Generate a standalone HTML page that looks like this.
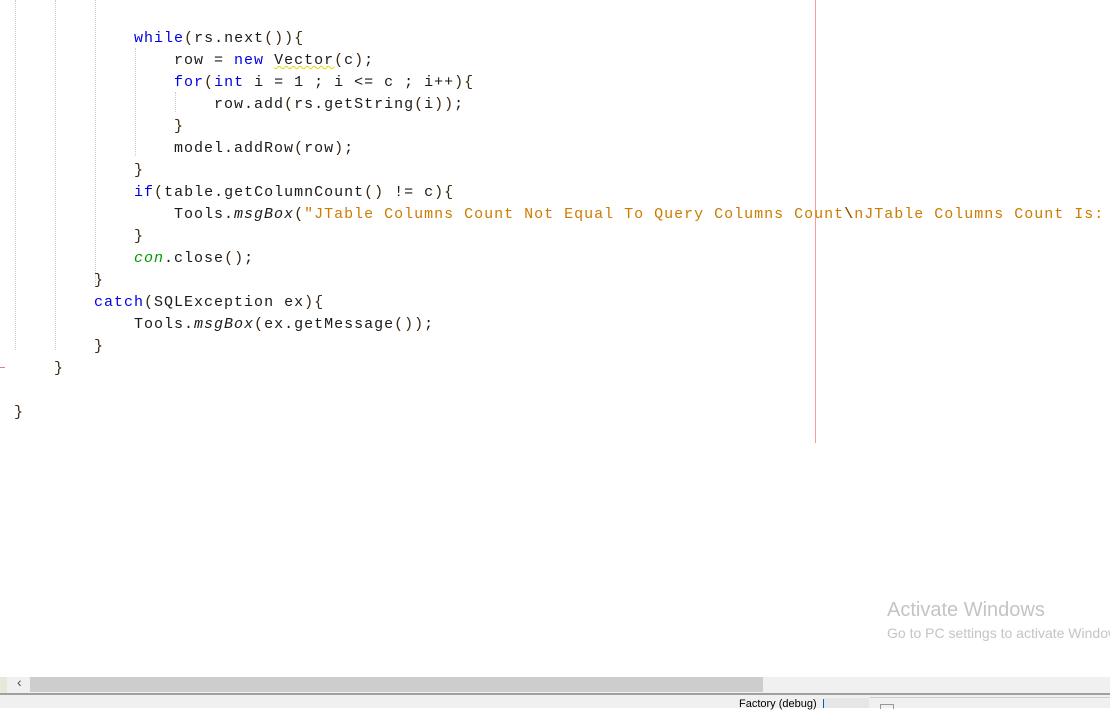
<!DOCTYPE html>
<html><head><style>
body{margin:0;width:1110px;height:708px;overflow:hidden;background:#fff;position:relative;font-family:"Liberation Mono",monospace}
.l{position:absolute;left:14px;font-size:15px;letter-spacing:1px;line-height:22px;white-space:pre;color:#1a1a1a}
.k{color:#0000e6}.p{color:#3a2a10}.s{color:#ce7b00}.i{font-style:italic}.g{color:#009900;font-style:italic}
.ig{position:absolute;width:0;border-left:1px dotted #ccc}
</style></head><body>
<div class="ig" style="left:15px;top:0;height:350px"></div>
<div class="ig" style="left:55px;top:0;height:350px"></div>
<div class="ig" style="left:95px;top:0;height:285px"></div>
<div class="ig" style="left:135px;top:48px;height:108px"></div>
<div class="ig" style="left:175px;top:92px;height:20px"></div>
<div style="position:absolute;left:815px;top:0;width:1px;height:443px;background:#ff9a9a"></div>
<div style="position:absolute;left:0;top:367px;width:5px;height:1px;background:#e08080"></div>
<div class="l" style="top:28px">            <span class="k">while</span><span class="p">(</span>rs.next<span class="p">())</span><span class="p">{</span></div>
<div class="l" style="top:50px">                row = <span class="k">new</span> <span style="text-decoration:underline wavy #e6d800;text-decoration-thickness:1px">Vector</span><span class="p">(</span>c<span class="p">)</span>;</div>
<div class="l" style="top:72px">                <span class="k">for</span><span class="p">(</span><span class="k">int</span> i = 1 ; i &lt;= c ; i++<span class="p">){</span></div>
<div class="l" style="top:94px">                    row.add<span class="p">(</span>rs.getString<span class="p">(</span>i<span class="p">))</span>;</div>
<div class="l" style="top:116px">                <span class="p">}</span></div>
<div class="l" style="top:138px">                model.addRow<span class="p">(</span>row<span class="p">)</span>;</div>
<div class="l" style="top:160px">            <span class="p">}</span></div>
<div class="l" style="top:182px">            <span class="k">if</span><span class="p">(</span>table.getColumnCount<span class="p">()</span> != c<span class="p">){</span></div>
<div class="l" style="top:204px">                Tools.<span class="i">msgBox</span><span class="p">(</span><span class="s">"JTable Columns Count Not Equal To Query Columns Count<b style="color:#8a5a00">\</b>nJTable Columns Count Is: </span></div>
<div class="l" style="top:226px">            <span class="p">}</span></div>
<div class="l" style="top:248px">            <span class="g">con</span>.close<span class="p">()</span>;</div>
<div class="l" style="top:270px">        <span class="p">}</span></div>
<div class="l" style="top:292px">        <span class="k">catch</span><span class="p">(</span>SQLException ex<span class="p">){</span></div>
<div class="l" style="top:314px">            Tools.<span class="i">msgBox</span><span class="p">(</span>ex.getMessage<span class="p">())</span>;</div>
<div class="l" style="top:336px">        <span class="p">}</span></div>
<div class="l" style="top:358px">    <span class="p">}</span></div>
<div class="l" style="top:402px"><span class="p">}</span></div>
<div style="position:absolute;left:887px;top:599px;font-family:'Liberation Sans',sans-serif;font-size:20px;color:#c4c4c4">Activate Windows</div>
<div style="position:absolute;left:887px;top:625px;font-family:'Liberation Sans',sans-serif;font-size:14px;color:#c4c4c4;white-space:nowrap">Go to PC settings to activate Windows.</div>
<div style="position:absolute;left:0;top:677px;width:1110px;height:16px;background:#f0f0f0"></div>
<div style="position:absolute;left:0;top:677px;width:7px;height:16px;background:#e8e8d8"></div>
<div style="position:absolute;left:17px;top:674px;font-family:'Liberation Sans',sans-serif;font-size:14px;color:#604060">‹</div>
<div style="position:absolute;left:30px;top:677px;width:733px;height:15px;background:#cdcdcd"></div>
<div style="position:absolute;left:0;top:693px;width:1110px;height:2px;background:#a0a0a0"></div>
<div style="position:absolute;left:0;top:695px;width:1110px;height:13px;background:#f0f0f0"></div>
<div style="position:absolute;left:739px;top:698px;font-family:'Liberation Sans',sans-serif;font-size:11px;color:#000">Factory (debug)</div>
<div style="position:absolute;left:823px;top:699px;width:1px;height:9px;background:#0060c0"></div>
<div style="position:absolute;left:824px;top:698px;width:45px;height:10px;background:#e6e6e6"></div>
<div style="position:absolute;left:870px;top:697px;width:240px;height:1px;background:#d0d0d0"></div>
<div style="position:absolute;left:880px;top:704px;width:12px;height:4px;border:1px solid #999;border-bottom:0"></div>
</body></html>
